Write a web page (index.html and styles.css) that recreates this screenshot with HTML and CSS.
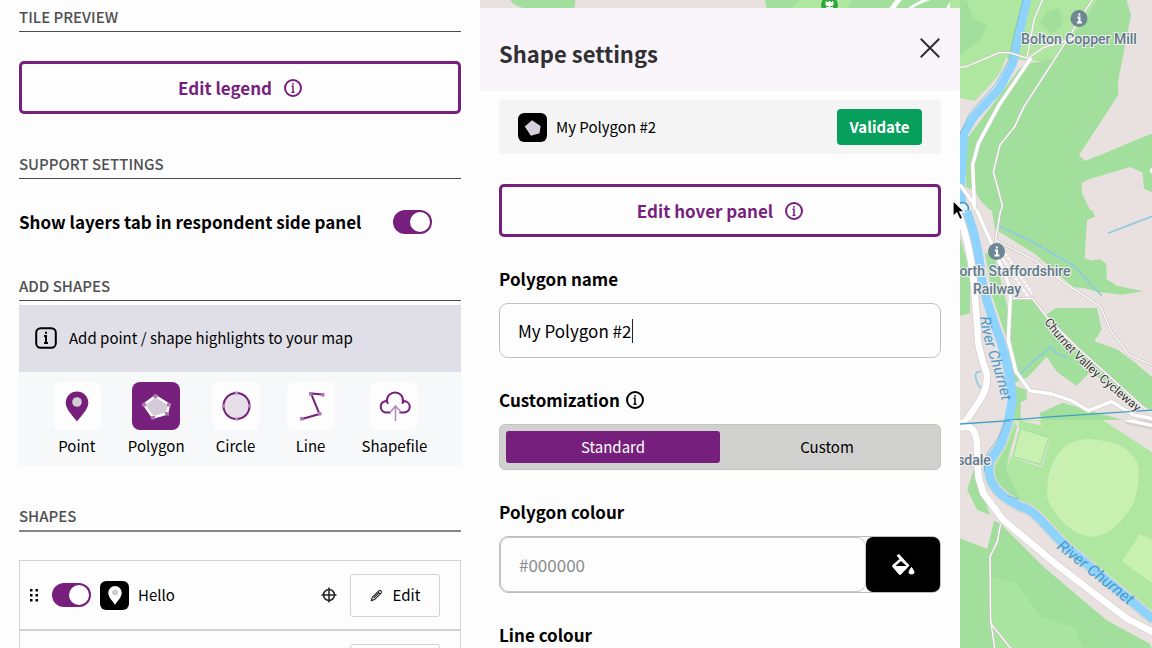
FILE: index.html
```html
<!DOCTYPE html>
<html lang="en">
<head>
<meta charset="utf-8">
<title>Shape settings</title>
<link rel="stylesheet" href="styles.css">
</head>
<body>
<main class="app">
  <aside class="sidebar">
    <h2 class="section-title">TILE PREVIEW</h2>
    <button class="outline-button legend-button" type="button">Edit legend
      <svg class="info-icon" viewBox="0 0 18 18"><circle cx="9" cy="9" r="8"/><path d="M7.500 7.200H9V13.300M7.500 13.300h3M9 4v1.800"/></svg>
    </button>

    <h2 class="section-title">SUPPORT SETTINGS</h2>
    <label class="layer-option">Show layers tab in respondent side panel
      <input class="toggle" type="checkbox" role="switch" checked>
    </label>

    <h2 class="section-title">ADD SHAPES</h2>
    <p class="notice">
      <svg class="notice-icon" viewBox="0 0 22 22"><rect x="1.200" y="1.200" width="19.600" height="19.600" rx="4.500"/><path d="M9 9h2v7M9 16h4M11 4.800v2"/></svg>
      Add point / shape highlights to your map
    </p>
    <div class="tools">
      <button class="tool" type="button">
        <svg class="tool-icon" viewBox="0 0 48 48"><path d="M24 39.500C21 35 12.700 28 12.700 20.800a11.300 11.300 0 0 1 22.600 0C35.300 28 27 35 24 39.500Z" fill="#771f7c"/><circle cx="24" cy="20" r="4.800" fill="#d2ced2"/></svg>
        Point
      </button>
      <button class="tool tool-active" type="button">
        <svg class="tool-icon" viewBox="0 0 48 48"><path d="M23.500 14 37 22.500l-2 9-14 4-9-13Z" fill="#d4cad8" stroke="#fff" stroke-width="2.500"/><path d="M21.500 12.500h4v3.500h-4zM35 21h4v3.500h-4zM33 30h4v3.500h-4zM19 34h4v3.500h-4zM10 21h4v3.500h-4z" fill="#b07ab5"/></svg>
        Polygon
      </button>
      <button class="tool" type="button">
        <svg class="tool-icon" viewBox="0 0 48 48"><circle cx="24.500" cy="24" r="13" fill="#e6dfe9" stroke="#771f7c" stroke-width="2"/><path d="M23 9.500h3v3h-3zM23 35.500h3v3h-3zM10 22.500h3v3h-3zM36 22.500h3v3h-3z" fill="#b48ab8"/></svg>
        Circle
      </button>
      <button class="tool" type="button">
        <svg class="tool-icon" viewBox="0 0 48 48"><path d="m36 12.500-12-1 8.500 20.500L15 37" fill="none" stroke="#771f7c" stroke-width="2"/><path d="M34 11h3.500v3.500H34zM22 10h3.500v3.500H22zM31 30h3.500v3.500H31zM13 35h3.500v3.500H13z" fill="#b07ab5"/></svg>
        Line
      </button>
      <button class="tool" type="button">
        <svg class="tool-icon" viewBox="0 0 48 48"><path d="M20.500 30.500h-3.800c-7 0-8.500-10-.8-11.600l1 1c-1-12.500 17.500-12.500 16 0l1-.8c8.500 1 7 11.400 0 11.400h-4.500M17 20.500l1.500.8M32 21.200l2-1.200" fill="none" stroke="#771f7c" stroke-width="2"/><path d="M25.500 39V24.500m-5 5.500 5-6 5.500 6" fill="none" stroke="#b58bbb" stroke-width="1.500"/></svg>
        Shapefile
      </button>
    </div>

    <h2 class="section-title section-title-strong">SHAPES</h2>
    <ul class="shape-list">
      <li class="shape-row">
        <svg class="grip" viewBox="0 0 10 14"><path d="M1 1h2.500v2.500H1zM6.500 1H9v2.500H6.500zM1 6h2.500v2.500H1zM6.500 6H9v2.500H6.500zM1 11h2.500v2.500H1zM6.500 11H9v2.500H6.500z"/></svg>
        <input class="toggle" type="checkbox" role="switch" aria-label="Show Hello" checked>
        <svg class="shape-badge" viewBox="0 0 28 28"><rect width="28" height="28" rx="6"/><path d="M14.500 23C13 20 8 16 8 11.300a6.500 6.500 0 0 1 13 0C21 16 16 20 14.500 23Z" fill="#fff"/><circle cx="14.500" cy="11" r="2.800" fill="#cdcdcd"/></svg>
        <span class="shape-name">Hello</span>
        <svg class="target" viewBox="0 0 16 16"><circle cx="8" cy="8" r="5.500"/><path d="M8 .5v15M.5 8h15"/></svg>
        <button class="edit-button" type="button"><svg class="pencil" viewBox="0 0 14 14"><path d="M1.500 12.500 2.500 9 9.800 1.800q.7-.7 1.500 0l.8.9q.7.7 0 1.500L5 11.400ZM8.500 3.200l2.300 2.300M4 9.800l5-5"/></svg>Edit</button>
      </li>
      <li class="shape-row">
        <span class="shape-name"></span>
        <button class="edit-button" type="button" aria-label="Edit shape"></button>
      </li>
    </ul>
  </aside>

  <svg class="map" viewBox="480 0 672 648" preserveAspectRatio="xMaxYMin slice">
    <rect x="480" width="672" height="648" fill="#e8e1df"/>
    <g>
      <path d="M510 0q5 8 25 10h38q3-5 2-10ZM765 0h195v10H767Z" fill="#a2df9c"/>
      <path d="M800 0h52l-5 10H790Z" fill="#b0e8a0"/>
      <path d="m900-2-9 12M955-2l-7 12" stroke="#fff" stroke-width="5"/>
      <path d="M940-4q-20 4-32 14" fill="none" stroke="#fff" stroke-width="3"/>
      <circle cx="829.500" cy="5" r="8.500" fill="#2ea836"/>
      <path d="M826 1.500 828 3l1.500-2 1.500 2 2-1.500V5q-3.500 2-7 0ZM829.500 5v5M826 7l3.500 2 3.500-2" fill="#fff" stroke="#fff"/>
    </g>
    <svg x="950" y="0" width="202" height="210" viewBox="0 0 606 630">
      <path d="M0 0h220l-35 170-100 135L0 288Z" fill="#afe7a0"/>
      <path d="M30 0h20l18 55 42 20-20 45-60 45Z" fill="#a2df9c"/>
      <path d="M220 0h310l13 45-39 200 1 40-118 180 18 18 70-28 90-38 41-16v175l-24-10-4-48-37-17-120 35-26 12 1 33 38 75H125L75 575 48 560V420l90-120 97-130h-40Z" fill="#a2df9c"/>
      <path d="M243 0h200l-65 95-65 80-118 15 20-80Z" fill="#afe7a0"/>
      <path d="m290 35 40-12-3 10 13 20-7 30-28 17-33-30Z" fill="#a2df9c"/>
      <path d="M197 180h35l50 5-45 4-30 17Z" fill="#e8e1df"/>
      <path d="m172 175-22 55-75 78" fill="none" stroke="#e8e1df" stroke-width="9"/>
      <path d="M232-5 204 120l-15 70-40 75-77 85-30 50-6 95-4 70 10 100" fill="none" stroke="#8ed3fd" stroke-width="25"/>
      <path d="m219 0-27 105-15 75-40 72-80 92-27 58" fill="none" stroke="#5eb0d9" stroke-width="2"/>
      <path d="m48 560 72 70H65Z" fill="#e8e1df"/>
      <g fill="none" stroke="#c9c3c0" stroke-width="7"><path d="m427 0-20 30-75 120-110 170-28 60-44 55-20 80 27 100-3 18M30 202l18-2 100-42h30l56 17 46-32 97-29M277 0l-25 60-20 110"/></g>
      <g fill="none" stroke="#fff" stroke-width="4"><path d="m427 0-20 30-75 120-110 170-28 60-44 55-20 80 27 100-3 18M30 202l18-2 100-42h30l56 17 46-32 97-29M277 0l-25 60-20 110"/></g>
      <path d="m243 174-95 140-62 115-18 65 5 120-43-60M68 605l10 30" fill="none" stroke="#d3d1cf" stroke-width="13"/>
      <path d="m243 174-95 140-62 115-18 65 5 120-43-60M68 605l10 30" fill="none" stroke="#fff" stroke-width="10"/>
      <circle cx="38" cy="625" r="17" fill="#def4ff" stroke="#347f9e" stroke-width="4"/>
      <circle cx="607" cy="512" r="8" fill="#fff"/>
    </svg>
    <svg x="950" y="210" width="202" height="210" viewBox="0 0 606 630">
      <path d="M125 0h302l8 20-24 10-7 115 23 7 22-5 20 15 1 45 30 20 80 17-65 10-75-9-35-10-35-3-115-100-120-75Z" fill="#a2df9c"/>
      <path d="m30 80 30 110v120l-30 8Z" fill="#a2df9c"/>
      <path d="m180 270 62-4 45 50 30-22h124l14 65-22 35 70 25 60 45 43 38v100l-35-20-151-95-40 40-60-42-30-45-57 62-47 20-15-35Z" fill="#a2df9c"/>
      <path d="m105 130 27 0 40 160 17 20v60l-14 30-48-140Z" fill="#a2df9c"/>
      <path d="m190 525 40 15v30l-18 5v55h-30Z" fill="#a2df9c"/>
      <path d="m268 610 70-32 180 52H275Z" fill="#a2df9c"/>
      <path d="m138 45 100 45 130 75 87 92" fill="none" stroke="#8ec9e1" stroke-width="5"/>
      <path d="m606 19-132 51M186 515l65-62 50-43 18 20 30 10M92 485q-20 0-14 20 4 20 17 30" fill="none" stroke="#8ec9e1" stroke-width="5"/>
      <path d="M48 0c20 50 40 130 47 210 15 70 34 120 56 180 18 60 35 130 36 180l-12 65" fill="none" stroke="#8ed3fd" stroke-width="27"/>
      <path d="m152 0-15 90 112 58 88 66 115 76 32 75 55 72 67 27M188 266h60l42 55 90 90 220 198" fill="none" stroke="#c9c3c0" stroke-width="8"/>
      <path d="m152 0-15 90 112 58 88 66 115 76 32 75 55 72 67 27M188 266h60l42 55 90 90 220 198" fill="none" stroke="#fff" stroke-width="4"/>
      <path d="m165 130 80 120m-88-105 80 120" fill="none" stroke="#fff" stroke-width="6" stroke-dasharray="10 4"/>
      <path d="m80 0 40 90 45 105 17 45-7 150 23 95 42 57 65 10 60 20 50 30 70-27 65 40 65 12 40 14" fill="none" stroke="#d3d1cf" stroke-width="14"/>
      <path d="m80 0 40 90 45 105 17 45-7 150 23 95 42 57 65 10 60 20 50 30 70-27 65 40 65 12 40 14" fill="none" stroke="#fff" stroke-width="10"/>
      <path d="M25 10q35 90 47 210l13 180q5 30 25 90 5 40-20 80l-47 70" fill="none" stroke="#d5cfcd" stroke-width="25"/>
      <path d="M25 10q35 90 47 210l13 180q5 30 25 90 5 40-20 80l-47 70" fill="none" stroke="#fff" stroke-width="20"/>
      <path d="m30 642 280-22 300-20" fill="none" stroke="#3f9fc5" stroke-width="4"/>
    </svg>
    <svg x="950" y="420" width="202" height="228" viewBox="0 0 606 684">
      <path d="m30 355 82 32 20-85 20 10 130 130 190 160 125 68 9 14H30Z" fill="#a2df9c"/>
      <path d="m120 470 80 20 70 100 100 30 30 64H130Z" fill="#a9e4a0"/>
      <path d="m72 145-20 65 30 60 38 15-22-65Z" fill="#a2df9c"/>
      <path d="M198 0h260l148 97v475l-290-240-110-95-60-20-25-65 50-100Z" fill="#afe7a0"/>
      <path d="m205 3-35 120v30l40 85-60-15-20-70 50-90Z" fill="#a2df9c"/>
      <path d="M350 75q50-30 120-10 65 10 93 65 10 60-15 125-55 90-120 95-80-5-135-110-10-110 57-165Z" fill="#c8f1b1"/>
      <path d="m570 342 36 17v130l-90-65Z" fill="#c8f1b1"/>
      <path d="m206 0 0 22 95 30-25 90-95-30-12 50 10-60 22-80-5-20h70l10 15" fill="#e8e1df"/>
      <path d="m211 26 86 26-25 82-84-24Z" fill="#c8f1b1" stroke="#a2df9c" stroke-width="4"/>
      <path d="m180-8-25 75c-12 30-33 35-39 75 0 60 40 90 100 120 50 10 90 90 165 145l230 192" fill="none" stroke="#d9d8d2" stroke-width="35"/>
      <path d="m180-8-25 75c-12 30-33 35-39 75 0 60 40 90 100 120 50 10 90 90 165 145l230 192" fill="none" stroke="#8ed3fd" stroke-width="26"/>
      <path d="M166 0q-15 55-48 90-15 25-15 65m70 73 35 10" fill="none" stroke="#5eb0d9" stroke-width="2"/>
      <path d="m152 310-10 55-22 45 2 200 60 75M122 600l12 84" fill="none" stroke="#c9c3c0" stroke-width="8"/>
      <path d="m152 310-10 55-22 45 2 200 60 75M122 600l12 84" fill="none" stroke="#fff" stroke-width="4"/>
      <path d="M30 25q40-20 50 35l5 110 15 50 60 80 155 130 215 165 80 42M30 10l20-15M530 0l80 17" fill="none" stroke="#d5cfcd" stroke-width="24"/>
      <path d="M30 25q40-20 50 35l5 110 15 50 60 80 155 130 215 165 80 42M30 10l20-15" fill="none" stroke="#fff" stroke-width="20"/>
      <path d="M530 0l80 17" stroke="#fff" stroke-width="10"/>
      <path d="m30 12 150-10" stroke="#3f9fc5" stroke-width="4"/>
    </svg>
    <g class="poi"><circle cx="1079" cy="18.500" r="8.500"/><circle cx="996.500" cy="251.500" r="8.500"/><path d="M1077.500 17.500h2v5m-2.500 0h5M995 250.500h2v5m-2.500 0h5M1079.300 13.500v2M996.800 246.500v2"/></g>
    <g class="place-labels">
      <text x="1079" y="44">Bolton Copper Mill</text>
      <text x="1015" y="276">orth Staffordshire</text>
      <text x="997" y="294">Railway</text>
      <text x="974" y="465">sdale</text>
    </g>
    <path id="river-north" d="M980 317C983 350 1002 380 1005 425" fill="none"/>
    <path id="river-south" d="M1056 548 1142 616" fill="none"/>
    <path id="cycleway" d="M1044 322Q1064 350 1094 376T1156 428" fill="none"/>
    <text class="river-label"><textPath href="#river-north">River Churnet</textPath></text>
    <text class="river-label river-label-large"><textPath href="#river-south">River Churnet</textPath></text>
    <text class="path-label"><textPath href="#cycleway">Churnet Valley Cycleway</textPath></text>
  </svg>

  <section class="settings">
    <header class="settings-header">
      <h1 class="settings-title">Shape settings</h1>
      <button class="close" type="button" aria-label="Close"><svg class="close-icon" viewBox="0 0 20 20"><path d="m.7.7 18.600 18.600M19.300.7.7 19.300"/></svg></button>
    </header>
    <div class="settings-body">
      <div class="current-shape">
        <svg class="shape-badge" viewBox="0 0 28 28"><rect width="28" height="28" rx="6"/><path d="m13.500 7 8.300 5.500-1 7-8.300 2.500L6.500 13Z" fill="#d8cfdd"/></svg>
        <span class="shape-name">My Polygon #2</span>
        <button class="validate" type="button">Validate</button>
      </div>
      <button class="outline-button" type="button">Edit hover panel
        <svg class="info-icon" viewBox="0 0 18 18"><circle cx="9" cy="9" r="8"/><path d="M7.500 7.200H9V13.300M7.500 13.300h3M9 4v1.800"/></svg>
      </button>
      <div class="field">
        <label class="field-label" for="name">Polygon name</label>
        <div class="name-box"><input class="text-input" id="name" type="text" value="My Polygon #2"><span class="caret"></span></div>
      </div>
      <div class="field">
        <div class="field-label" id="custom-label">Customization
          <svg class="info-icon" viewBox="0 0 18 18"><circle cx="9" cy="9" r="8"/><path d="M7.500 7.200H9V13.300M7.500 13.300h3M9 4v1.800"/></svg>
        </div>
        <div class="segments" role="group" aria-labelledby="custom-label">
          <button class="segment segment-active" type="button">Standard</button>
          <button class="segment" type="button">Custom</button>
        </div>
      </div>
      <div class="field">
        <label class="field-label" for="fill">Polygon colour</label>
        <div class="colour-field">
          <input class="colour-input" id="fill" type="text" placeholder="#000000">
          <button class="swatch" type="button" aria-label="Pick colour"><svg class="bucket" viewBox="0 0 24 24"><path d="M5.500 2.500 8 1l10.500 11.500L10 21.500q-1 .8-2 0L1.500 14q-.8-1 0-2L8.500 6ZM10 8l-5.500 5h11Z" fill="#fff" fill-rule="evenodd"/><path d="M20.500 14.500q5 6.500 0 6.500t0-6.500Z" fill="#fff" stroke="#fff"/></svg></button>
        </div>
      </div>
      <div class="field"><div class="field-label">Line colour</div></div>
    </div>
  </section>
</main>
<svg class="pointer" viewBox="0 0 15 22"><path d="M2 1.500v16l3.800-3.500 3 6.500 3-1.300-3-6.400h4.700Z" fill="#000" stroke="#fff" stroke-width="1.200"/></svg>
</body>
</html>
```
FILE: styles.css
```css
* { box-sizing: border-box; }
body, h1, h2, p, ul { margin: 0; padding: 0; }
body, button, input {
  font-family: "Noto Sans CJK SC", "Open Sans", sans-serif;
  font-size: 15px;
  line-height: 24px;
  color: #000;
}
button { border: 0; padding: 0; background: none; }
svg { flex: none; }

.app {
  display: grid;
  grid-template-columns: 5fr 5fr 2fr;
  grid-template-rows: 100vh;
  overflow: hidden;
  background: #fdfdfe;
}
.sidebar { grid-column: 1; padding: 5px 19px 0; overflow: hidden; }
.map { grid-column: 2 / 4; grid-row: 1; width: 100%; height: 100%; }
.settings {
  grid-column: 2;
  grid-row: 1;
  margin-top: 8px;
  overflow: hidden;
  background: #fdfdfe;
}

.section-title {
  padding-bottom: 2px;
  border-bottom: 1px solid #4b4b4d;
  font-size: 15px;
  font-weight: 500;
  color: #4f4f51;
}
.section-title-strong { margin-top: 38px; border-bottom: 2px solid #858587; }

.outline-button {
  display: flex;
  align-items: center;
  justify-content: center;
  gap: 12px;
  width: 100%;
  height: 53px;
  border: 3px solid #771f7c;
  border-radius: 5px;
  font-size: 17px;
  font-weight: 700;
  color: #771f7c;
}
.legend-button { margin: 29px 0 38px; }
.info-icon { width: 18px; height: 18px; fill: none; stroke: currentColor; stroke-width: 2; }
.info-icon path { stroke-width: 1.500; }

.layer-option {
  display: flex;
  align-items: center;
  justify-content: space-between;
  margin: 31px 0 40px;
  padding-right: 29px;
  font-size: 17px;
  font-weight: 700;
}
.toggle {
  display: flex;
  flex: none;
  appearance: none;
  width: 39px;
  height: 24px;
  margin: 0;
  padding: 2px;
  border-radius: 12px;
  background: #ccc;
}
.toggle::before { content: ""; width: 20px; height: 20px; border-radius: 50%; background: #fff; }
.toggle:checked { justify-content: flex-end; background: #771f7c; }

.notice {
  display: flex;
  align-items: center;
  gap: 12px;
  height: 67px;
  margin-top: 4px;
  padding: 0 16px 2px;
  background: #e0dfe7;
}
.notice-icon { width: 22px; height: 22px; fill: none; stroke: #000; stroke-width: 2; }
.tools {
  display: flex;
  justify-content: center;
  gap: 27px;
  padding: 10px 0 8px;
  background: #f7f8f9;
}
.tool { display: flex; flex-direction: column; align-items: center; gap: 4px; }
.tool-icon { width: 48px; height: 48px; border-radius: 8px; background: #fdfdfe; }
.tool-active .tool-icon { background: #771f7c; }

.shape-list { margin-top: 28px; border: 1px solid #d2d2d3; list-style: none; }
.shape-row {
  display: flex;
  align-items: center;
  height: 70px;
  padding: 0 20px 0 9px;
  border-bottom: 2px solid #d2d2d3;
}
.grip { width: 10px; height: 14px; margin-right: 13px; }
.shape-badge { width: 29px; height: 29px; margin: 0 9px; }
.shape-name { flex: 1; }
.target { width: 16px; height: 16px; margin-right: 13px; fill: none; stroke: #222; stroke-width: 1.500; }
.edit-button {
  display: flex;
  align-items: center;
  justify-content: center;
  gap: 10px;
  width: 90px;
  height: 43px;
  border: 1px solid #d2d2d6;
  border-radius: 3px;
}
.pencil { width: 13px; height: 13px; fill: none; stroke: #222; stroke-width: 1.200; }

.settings-header {
  display: flex;
  align-items: flex-start;
  justify-content: space-between;
  height: 83px;
  padding: 30px 20px 0 19px;
  background: #f9f5fb;
}
.settings-title { font-size: 22px; line-height: 30px; font-weight: 700; color: #303033; }
.close { display: flex; }
.close-icon { width: 20px; height: 20px; fill: none; stroke: #303033; stroke-width: 2; }
.settings-body { display: flex; flex-direction: column; gap: 30px; padding: 9px 19px 0; }
.current-shape {
  display: flex;
  align-items: center;
  height: 54px;
  padding: 0 19px 0 10px;
  background: #f4f4f4;
}
.validate {
  width: 85px;
  height: 36px;
  border-radius: 4px;
  background: #069f5b;
  font-weight: 700;
  font-size: 15px;
  color: #fff;
}
.field { display: grid; gap: 12px; }
.field-label { display: flex; align-items: center; gap: 6px; font-size: 17px; font-weight: 700; }
.name-box { position: relative; display: flex; }
.text-input {
  width: 100%;
  height: 55px;
  padding: 0 18px;
  border: 1px solid #c1c1c2;
  border-radius: 9px;
  background: #fdfdfe;
  font-size: 17px;
}
.caret { position: absolute; left: 133px; top: 16px; width: 1px; height: 24px; background: #222; }
.segments {
  display: flex;
  height: 46px;
  padding: 6px;
  border: 1px solid #c4c4c3;
  border-radius: 6px;
  background: #d1d1cf;
}
.segment { flex: 1; border-radius: 3px; }
.segment-active { background: #771f7c; color: #fff; }
.colour-field {
  display: flex;
  height: 57px;
  border: 1px solid #bcbcbd;
  border-radius: 9px;
}
.colour-input {
  flex: 1;
  min-width: 0;
  padding: 0 18px;
  border: 1px solid #c6c6c7;
  border-radius: 9px;
  background: #fdfdfe;
  font-size: 17px;
}
.colour-input::placeholder { color: #8a8a8c; }
.swatch {
  display: flex;
  align-items: center;
  justify-content: center;
  width: 74px;
  border-radius: 7px;
  background: #000;
}
.bucket { width: 24px; height: 24px; }

.poi circle { fill: #6f8793; }
.poi path { fill: none; stroke: #fff; stroke-width: 2; }
.place-labels {
  font: 500 14px Roboto, sans-serif;
  text-anchor: middle;
  fill: #60798a;
  stroke: #f2f0ee;
  stroke-width: 2px;
  paint-order: stroke;
}
.river-label { font: italic 15px Roboto, sans-serif; fill: #4a9bca; }
.river-label-large { font-size: 16px; }
.path-label {
  font: 12px Roboto, sans-serif;
  fill: #333;
  stroke: #f2f0ee;
  stroke-width: 2px;
  paint-order: stroke;
}
.pointer { position: absolute; left: 951px; top: 199px; width: 15px; height: 22px; }
```
